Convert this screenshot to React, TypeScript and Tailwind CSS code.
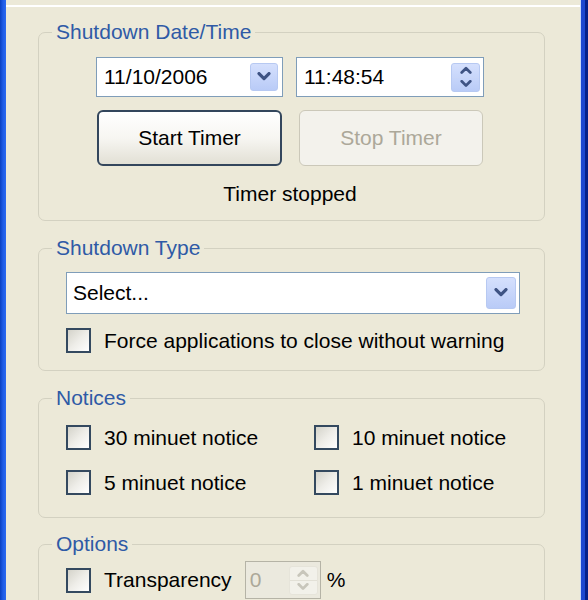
import type { ReactNode } from 'react';

const font = { fontFamily: '"Liberation Sans", Arial, sans-serif' };

function Chevron({ up = false, color = '#3e5384', size = 14 }: { up?: boolean; color?: string; size?: number }) {
  return (
    <svg width={size} height={size * 0.65} viewBox="0 0 14 9">
      <path
        d={up ? 'M2 7.5 L7 2.5 L12 7.5' : 'M2 1.5 L7 6.5 L12 1.5'}
        fill="none"
        stroke={color}
        strokeWidth="3.2"
        strokeLinecap="round"
        strokeLinejoin="round"
      />
    </svg>
  );
}

function DropButton() {
  return (
    <span className="flex h-[28px] w-[28px] items-center justify-center rounded-[3px] border border-[#b7c9f2] bg-linear-to-b from-[#d5e0fd] to-[#b9cbf7]">
      <Chevron />
    </span>
  );
}

function SpinButton({ disabled = false }: { disabled?: boolean }) {
  const color = disabled ? '#c8c6bb' : '#3e5384';
  return (
    <span
      className={`flex h-[29px] w-[29px] flex-col rounded-[3px] border ${
        disabled ? 'border-[#e6e4da] bg-[#f2f1ea]' : 'border-[#b7c9f2] bg-linear-to-b from-[#d5e0fd] to-[#b9cbf7]'
      }`}
    >
      <span className={`flex flex-1 items-center justify-center border-b ${disabled ? 'border-[#e2e0d6]' : 'border-[#c9d6f8]'}`}>
        <Chevron up color={color} size={12} />
      </span>
      <span className="flex flex-1 items-center justify-center">
        <Chevron color={color} size={12} />
      </span>
    </span>
  );
}

function Checkbox({ label }: { label: string }) {
  return (
    <label className="flex h-[25px] items-center gap-[13px]">
      <span className="h-[25px] w-[25px] shrink-0 border-2 border-[#34495f] bg-linear-to-br from-[#d4d3ca] via-[#eeede8] to-white" />
      <span className="text-[21px] leading-[24px] text-black">{label}</span>
    </label>
  );
}

function Group({ title, className, children }: { title: string; className?: string; children: ReactNode }) {
  return (
    <fieldset className={`ml-[32px] w-[507px] rounded-[7px] border border-[#d3d1c1] ${className ?? ''}`}>
      <legend className="ml-[13px] px-[4px] text-[21px] leading-[24px] text-[#2f5aa6]">{title}</legend>
      {children}
    </fieldset>
  );
}

export default function App() {
  return (
    <div className="flex h-[600px] w-[588px] overflow-hidden bg-[#ece9d8]" style={font}>
      <div className="h-full w-[6px] bg-linear-to-r from-[#0a3fc0] via-[#1f5ce6] to-[#2c6af0]" />

      <main className="flex-1">
        <div className="h-[5px]" />
        <div className="h-[2px] bg-white" />

        <Group title="Shutdown Date/Time" className="mt-[13px]">
          <div className="pb-[14px] pl-[57px] pt-[13px]">
            <div className="grid grid-cols-[187px_188px] gap-x-[13px] gap-y-[13px]">
              <div className="flex h-[40px] items-center justify-between border border-[#7f9db9] bg-white pl-[7px] pr-[4px]">
                <span className="text-[21px] text-black">11/10/2006</span>
                <DropButton />
              </div>
              <div className="flex h-[40px] items-center justify-between border border-[#7f9db9] bg-white pl-[7px] pr-[3px]">
                <span className="text-[21px] text-black">11:48:54</span>
                <SpinButton />
              </div>
              <button className="ml-[1px] h-[56px] w-[185px] rounded-[6px] border-2 border-[#33465c] bg-linear-to-b from-white via-[#f7f6f2] to-[#e2e0d5] text-[21px] text-black">
                Start Timer
              </button>
              <button
                disabled
                className="ml-[3px] h-[56px] w-[184px] rounded-[6px] border border-[#cbc8b9] bg-[#f3f2ec] text-[21px] text-[#aca899]"
              >
                Stop Timer
              </button>
            </div>
            <p className="mt-[16px] w-[388px] text-center text-[21px] leading-[24px] text-black">Timer stopped</p>
          </div>
        </Group>

        <Group title="Shutdown Type" className="mt-[15px]">
          <div className="pb-[17px] pl-[27px] pt-[12px]">
            <div className="flex h-[42px] w-[454px] items-center justify-between border border-[#7f9db9] bg-white pl-[6px] pr-[3px]">
              <span className="text-[21px] text-black">Select...</span>
              <span className="flex h-[32px] w-[30px] items-center justify-center rounded-[3px] border border-[#b7c9f2] bg-linear-to-b from-[#d5e0fd] to-[#b9cbf7]">
                <Chevron />
              </span>
            </div>
            <div className="mt-[14px]">
              <Checkbox label="Force applications to close without warning" />
            </div>
          </div>
        </Group>

        <Group title="Notices" className="mt-[15px]">
          <div className="grid grid-cols-[248px_1fr] gap-y-[20px] pb-[22px] pl-[27px] pt-[15px]">
            <Checkbox label="30 minuet notice" />
            <Checkbox label="10 minuet notice" />
            <Checkbox label="5 minuet notice" />
            <Checkbox label="1 minuet notice" />
          </div>
        </Group>

        <Group title="Options" className="mt-[14px]">
          <div className="flex items-center pb-[12px] pl-[27px] pt-[5px]">
            <Checkbox label="Transparency" />
            <div className="ml-[13px] flex h-[38px] w-[76px] items-center justify-between border border-[#b5b3a6] bg-[#ebe9de] pl-[4px] pr-[2px]">
              <span className="text-[21px] text-[#aca899]">0</span>
              <SpinButton disabled />
            </div>
            <span className="ml-[6px] text-[21px] text-black">%</span>
          </div>
        </Group>
      </main>

      <div className="flex h-full w-[8px]">
        <div className="w-[1px] bg-[#c6d6f6]" />
        <div className="w-[4px] bg-[#1d47d0]" />
        <div className="w-[3px] bg-[#06208a]" />
      </div>
    </div>
  );
}
